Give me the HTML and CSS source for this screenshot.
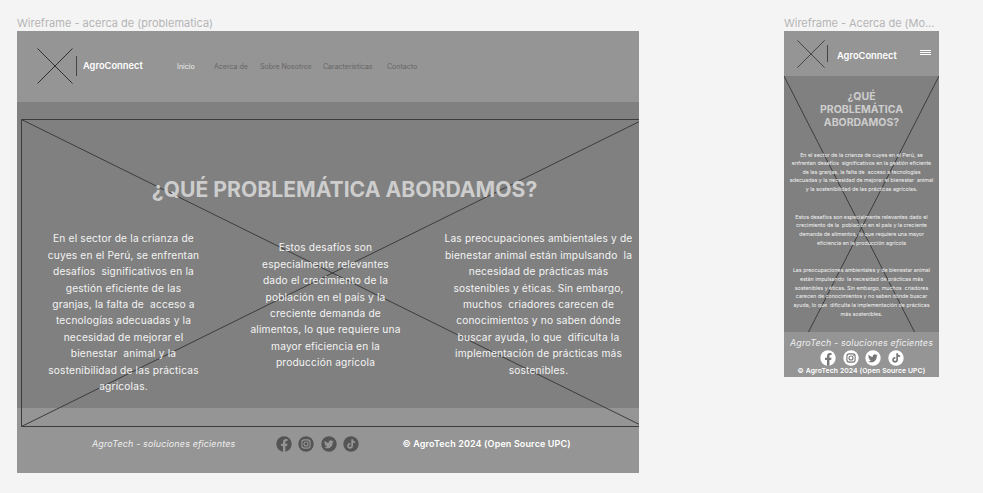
FILE: index.html
```html
<!DOCTYPE html>
<html lang="es">
<head>
<meta charset="utf-8">
<title>AgroConnect - Wireframes</title>
<link rel="stylesheet" href="styles.css">
</head>
<body>
<svg class="defs" aria-hidden="true">
  <symbol id="facebook" viewBox="0 0 16 16"><circle cx="8" cy="8" r="7.7"/><path class="glyph" d="M7 15.8V10H5V7.8h2V6.2C7 4.2 8.2 3 10 3c.8 0 1.5.1 1.5.1v1.8h-.9c-.9 0-1.2.6-1.2 1.2v1.7h2.1l-.4 2.2H9.400v5.800z"/></symbol>
  <symbol id="instagram" viewBox="0 0 16 16"><circle cx="8" cy="8" r="7.7"/><rect class="line" x="3.900" y="3.900" width="8.200" height="8.200" rx="2.300"/><circle class="line" cx="8" cy="8" r="2"/><circle class="glyph" cx="10.400" cy="5.600" r=".5"/></symbol>
  <symbol id="twitter" viewBox="0 0 16 16"><circle cx="8" cy="8" r="7.7"/><path class="glyph" d="M12.700 5.300c-.4.200-.7.300-1.100.3.400-.2.700-.6.900-1.100-.4.200-.8.400-1.300.5a2 2 0 0 0-3.400 1.800C6.100 6.700 4.700 5.900 3.700 4.700c-.5.900-.3 2.100.6 2.700-.3 0-.6-.1-.9-.3 0 1 .7 1.800 1.600 2-.3.100-.6.100-.9 0 .3.800 1 1.400 1.900 1.400-.8.700-1.900 1-2.900.9 3.900 2.400 8.600-.2 8.600-5 .4-.3.700-.7 1-1.100z"/></symbol>
  <symbol id="tiktok" viewBox="0 0 16 16"><circle cx="8" cy="8" r="7.700"/><path class="glyph" d="M8.300 3.200h1.600c.1 1.300 1 2.200 2.300 2.300v1.600c-.9 0-1.600-.3-2.200-.7v3.300c0 3.800-5.800 4-5.800.2 0-1.900 1.500-3 3.200-2.800v1.700c-.9-.3-1.600.2-1.600 1 0 1.600 2.500 1.600 2.500-.3z"/></symbol>
</svg>
<main class="canvas">
  <section class="desktop">
    <h2 class="label">Wireframe - acerca de (problematica)</h2>
    <div class="frame">
      <header class="header">
        <svg class="logo" viewBox="0 0 36 36"><path d="M.5.5l35 35M35.500.5l-35 35"/></svg>
        <span class="divider"></span>
        <strong class="brand">AgroConnect</strong>
        <nav class="nav"><a class="active">Inicio</a><a>Acerca de</a><a>Sobre Nosotros</a><a>Características</a><a>Contacto</a></nav>
      </header>
      <div class="content">
        <h1 class="title">¿QUÉ PROBLEMÁTICA ABORDAMOS?</h1>
        <div class="columns">
<p>En el sector de la crianza de
cuyes en el Perú, se enfrentan
desafíos  significativos en la
gestión eficiente de las
granjas, la falta de  acceso a
tecnologías adecuadas y la
necesidad de mejorar el
bienestar  animal y la
sostenibilidad de las prácticas
agrícolas.</p>
<p class="middle">Estos desafíos son
especialmente relevantes
dado el crecimiento de la
población en el país y la
creciente demanda de
alimentos, lo que requiere una
mayor eficiencia en la
producción agrícola</p>
<p>Las preocupaciones ambientales y de
bienestar animal están impulsando  la
necesidad de prácticas más
sostenibles y éticas. Sin embargo,
muchos  criadores carecen de
conocimientos y no saben dónde
buscar ayuda, lo que  dificulta la
implementación de prácticas más
sostenibles.</p>
        </div>
      </div>
      <footer class="footer">
        <em class="slogan">AgroTech - soluciones eficientes</em>
        <div class="social"><svg><use href="#facebook"/></svg><svg><use href="#instagram"/></svg><svg><use href="#twitter"/></svg><svg><use href="#tiktok"/></svg></div>
        <span class="copy">© AgroTech 2024 (Open Source UPC)</span>
      </footer>
      <svg class="cross" viewBox="0 0 622 442"><path d="M626 88.500H4.500v307H626M4.500 88.500l622 307M4.500 395.500l622-307"/></svg>
    </div>
  </section>
  <section class="mobile">
    <h2 class="label">Wireframe - Acerca de (Mo...</h2>
    <div class="frame">
      <header class="header">
        <svg class="logo" viewBox="0 0 36 36"><path d="M.5.5l35 35M35.500.5l-35 35"/></svg>
        <span class="divider"></span>
        <strong class="brand">AgroConnect</strong>
        <span class="menu"></span>
      </header>
      <div class="content">
        <svg class="cross" viewBox="0 0 155 257"><path d="M0 0l155 304M155 0L0 304"/></svg>
        <h1 class="title">¿QUÉ
PROBLEMÁTICA
ABORDAMOS?</h1>
<p>En el sector de la crianza de cuyes en el Perú, se
enfrentan desafíos  significativos en la gestión eficiente
de las granjas, la falta de  acceso a tecnologías
adecuadas y la necesidad de mejorar el bienestar  animal
y la sostenibilidad de las prácticas agrícolas.</p>
<p>Estos desafíos son especialmente relevantes dado el
crecimiento de la  población en el país y la creciente
demanda de alimentos, lo que requiere una mayor
eficiencia en la producción agrícola</p>
<p>Las preocupaciones ambientales y de bienestar animal
están impulsando  la necesidad de prácticas más
sostenibles y éticas. Sin embargo, muchos  criadores
carecen de conocimientos y no saben dónde buscar
ayuda, lo que  dificulta la implementación de prácticas
más sostenibles.</p>
      </div>
      <footer class="footer">
        <em class="slogan">AgroTech - soluciones eficientes</em>
        <div class="social"><svg><use href="#facebook"/></svg><svg><use href="#instagram"/></svg><svg><use href="#twitter"/></svg><svg><use href="#tiktok"/></svg></div>
        <span class="copy">© AgroTech 2024 (Open Source UPC)</span>
      </footer>
    </div>
  </section>
</main>
</body>
</html>
```
FILE: styles.css
```css
* { box-sizing: border-box; }
body { margin: 0; background: #f4f4f4; font-family: Inter, sans-serif; overflow: hidden; }
h1, h2, p { margin: 0; }
.defs { display: none; }
.canvas { display: flex; height: 493px; padding: 16px 0 0 17px; }
.desktop { width: 622px; margin-right: 145px; }
.mobile { width: 155px; }
.label { height: 15px; line-height: 14px; font-size: 11px; font-weight: 400; color: #b5b5b5; white-space: nowrap; }
.mobile .label { letter-spacing: -.05px; }
.frame { position: relative; background: #808080; color: #fff; }
.header { display: flex; align-items: center; background: #959595; white-space: nowrap; }
.logo { flex: none; fill: none; stroke: #303030; stroke-width: 1; }
.divider { flex: none; width: 1px; background: #444; }
.brand { font-weight: 600; }
.title { color: #cdcdcd; font-weight: 700; text-align: center; white-space: pre; }
.content p { white-space: pre; text-align: center; color: #f4f4f4; }
.footer { background: #959595; white-space: nowrap; }
.cross { position: absolute; fill: none; stroke: #3c3c3c; stroke-width: 1; }
.social { display: flex; }
.social svg { flex: none; width: 16px; height: 16px; fill: #545454; --mark: #959595; }
.glyph { fill: var(--mark); }
.line { fill: none; stroke: var(--mark); stroke-width: 1.1; }
.slogan { font-weight: 400; color: #eee; }
.copy { font-weight: 600; }

.desktop .frame { height: 442px; }
.desktop .header { height: 71px; padding: 0 0 2px 20px; }
.desktop .logo { width: 36px; height: 36px; }
.desktop .divider { height: 20px; margin: 0 6px 0 3px; }
.desktop .brand { width: 94px; font-size: 9.3px; }
.nav { display: grid; grid-template-columns: 37px 46px 63px 64px auto; font-size: 7px; color: #666; padding-top: 2px; }
.nav .active { color: #eee; }
.desktop .content { position: relative; z-index: 1; height: 306px; padding-top: 75px; }
.desktop .title { font-size: 21.150px; line-height: 26px; padding-left: 33px; }
.columns { display: grid; grid-template-columns: 213px 191px 235px; padding-top: 27.300px; font-size: 10.200px; line-height: 16.4px; letter-spacing: .17px; }
.columns p { justify-self: center; }
.middle { padding-top: 9px; }
.desktop .footer { display: flex; align-items: center; height: 65px; padding: 6px 0 0 75px; }
.desktop .slogan { width: 184px; font-size: 9px; letter-spacing: .13px; }
.desktop .social { width: 126.500px; gap: 6.400px; }
.desktop .copy { font-size: 9px; letter-spacing: .13px; }
.desktop .cross { inset: 0; width: 622px; height: 442px; }

.mobile .frame { height: 346px; }
.mobile .header { height: 45px; padding-left: 13px; }
.mobile .logo { width: 28px; height: 28px; }
.mobile .divider { height: 17px; margin: 0 9px 0 2px; }
.mobile .brand { width: 83px; font-size: 9.300px; padding-top: 3px; }
.menu { width: 11px; height: 5px; margin-bottom: 3px; border: solid #fff; border-width: 1px 0; background: linear-gradient(#fff, #fff) center / 100% 1px no-repeat; }
.mobile .content { position: relative; height: 256px; padding-top: 13.500px; overflow: hidden; }
.mobile .content > :not(.cross) { position: relative; }
.mobile .content > .cross { left: 0; top: 0; width: 155px; height: 257px; }
.mobile .title { font-size: 10.500px; line-height: 13px; margin-bottom: 22px; }
.mobile .content p { font-size: 5.300px; line-height: 8.650px; margin-bottom: 19px; }
.mobile .footer { height: 45px; display: flex; flex-direction: column; align-items: center; padding-top: 4px; }
.mobile .slogan { font-size: 9px; line-height: 14px; letter-spacing: .12px; }
.mobile .social { gap: 6.400px; padding-left: 1px; }
.mobile .social svg { fill: #fff; --mark: #777; }
.mobile .copy { font-size: 6.800px; line-height: 9px; letter-spacing: .12px; }
```
